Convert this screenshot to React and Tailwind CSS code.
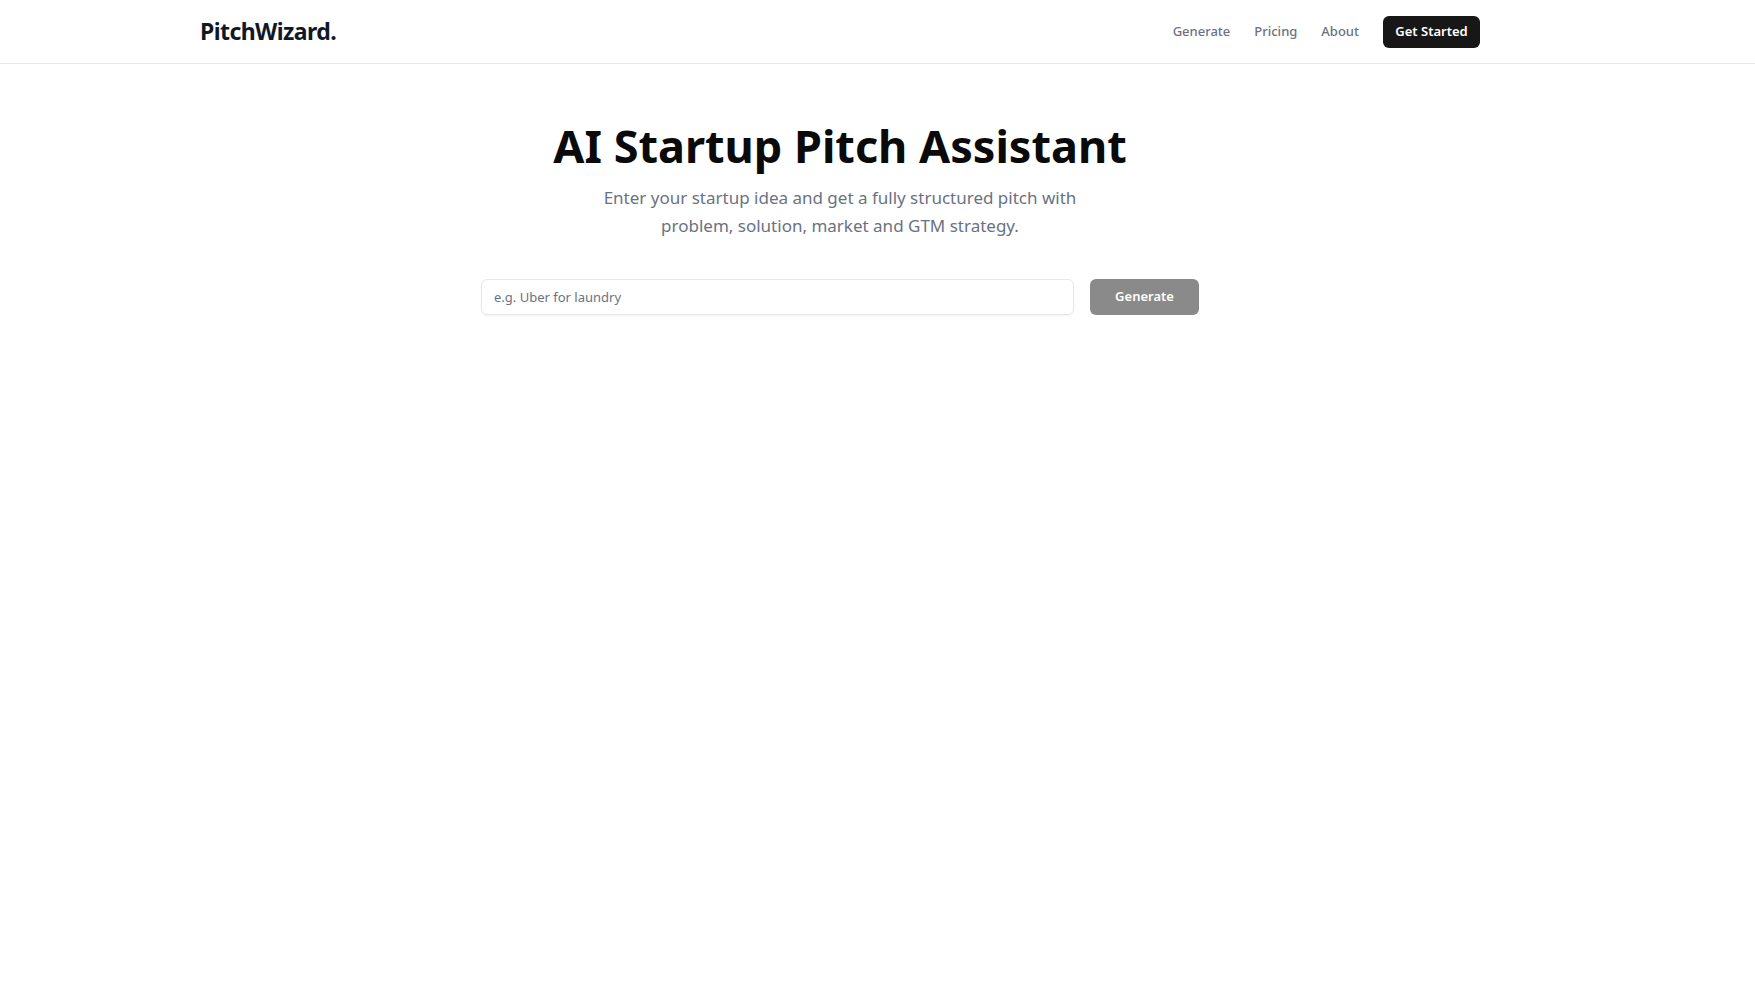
import { useState } from 'react';

const font = { fontFamily: '"Segoe UI", "Noto Sans", "Open Sans", sans-serif' };

const Navbar = () => (
  <header className="border-b border-gray-200 bg-white">
    <div className="w-[1680px]">
      <div className="max-w-7xl mx-auto h-[63px] flex items-center justify-between">
        <a href="#" className="text-[23px] font-bold tracking-tight text-gray-900">
          PitchWizard.
        </a>
        <nav className="flex items-center gap-6">
          <a href="#" className="text-[13px] font-medium text-gray-500 hover:text-gray-900">Generate</a>
          <a href="#" className="text-[13px] font-medium text-gray-500 hover:text-gray-900">Pricing</a>
          <a href="#" className="text-[13px] font-medium text-gray-500 hover:text-gray-900">About</a>
          <a
            href="#"
            className="inline-flex items-center justify-center h-8 w-[97px] rounded-md bg-neutral-900 text-white text-[13px] font-semibold"
          >
            Get Started
          </a>
        </nav>
      </div>
    </div>
  </header>
);

const App = () => {
  const [idea, setIdea] = useState('');

  return (
    <div className="min-h-screen bg-white" style={font}>
      <Navbar />
      <div className="w-[1680px]">
        <main className="flex flex-col items-center px-4 pt-[59px]">
          <h1 className="text-[45px] leading-none font-bold text-neutral-950 text-center">
            AI Startup Pitch Assistant
          </h1>
          <p className="mt-4 max-w-lg text-[17px] leading-7 text-gray-500 text-center">
            Enter your startup idea and get a fully structured pitch with problem, solution, market and GTM strategy.
          </p>

          <form
            className="mt-[39px] flex w-[718px] gap-4"
            onSubmit={(e) => e.preventDefault()}
          >
            <input
              type="text"
              value={idea}
              onChange={(e) => setIdea(e.target.value)}
              placeholder="e.g. Uber for laundry"
              className="flex-1 h-9 px-3 rounded-md border border-gray-200 text-[13px] text-gray-900 placeholder:text-gray-500 shadow-xs focus:outline-none"
            />
            <button
              type="submit"
              disabled={!idea}
              className="h-9 w-[109px] rounded-md bg-neutral-900 text-white text-[13px] font-semibold disabled:opacity-50"
            >
              Generate
            </button>
          </form>
        </main>
      </div>
    </div>
  );
};

export default App;
